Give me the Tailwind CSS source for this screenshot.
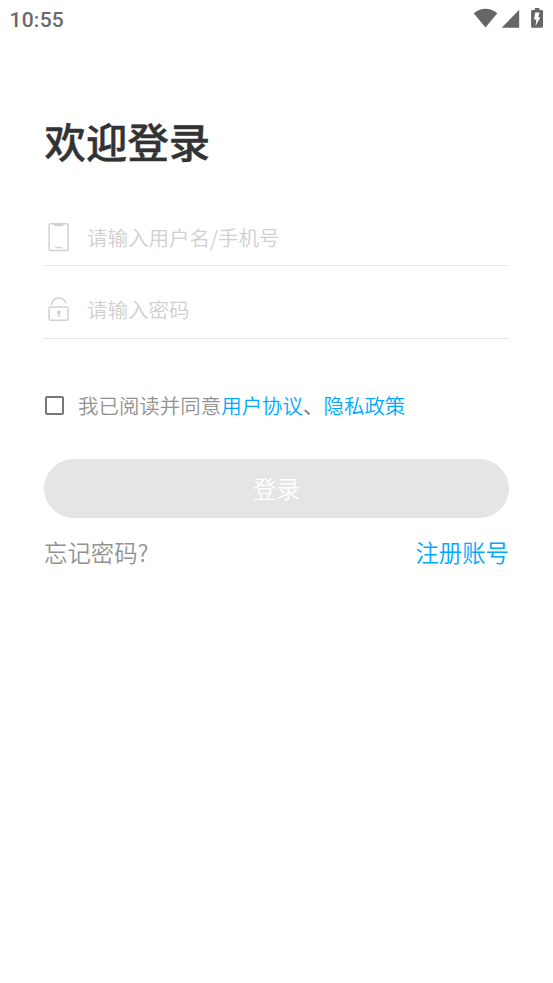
<!DOCTYPE html>
<html lang="zh-CN">
<head>
<meta charset="utf-8">
<title>登录</title>
<script src="https://cdn.jsdelivr.net/npm/@tailwindcss/browser@4"></script>
</head>
<body class="bg-white">
<div class="w-[553px] h-[983px] overflow-hidden bg-white font-['Noto_Sans_CJK_SC',sans-serif] font-[350] whitespace-nowrap">
  <header class="h-[38px] pl-[9.5px] pr-[10px] flex items-center justify-between text-[#6a6a6a]">
    <span class="pt-px font-['Roboto',sans-serif] font-medium text-[21px] leading-[38px] tracking-[0.25px]">10:55</span>
    <svg class="w-[70px] h-[38px]" viewBox="473 0 70 38" fill="#666">
      <path d="M473.700 13.200Q485.500 4.400 497.300 13.200L485.500 27.400Z"/>
      <path d="M519.200 9.700V27.700H501.700Z"/>
      <path fill-rule="evenodd" d="M534.800 8H539.400V10H541.600Q543 10 543 11.400V26.400Q543 27.800 541.600 27.800H532.500Q531.100 27.800 531.100 26.400V11.400Q531.100 10 532.500 10H534.800ZM535.200 12.500L534 19.500H536.300L535.600 25.700L540.400 17.200H538.200L539.600 12.500Z"/>
    </svg>
  </header>
  <main class="pt-[69px] px-11">
    <h1 class="h-[66px] pl-[0.6px] leading-[66px] text-[41.400px] font-medium text-[#333] [-webkit-text-stroke:0.4px_#333]">欢迎登录</h1>
    <div class="mt-[35px] h-[58px] border-b border-[#e8e8e8] flex items-center">
      <svg class="w-[30px] h-[58px] shrink-0" viewBox="44 208 30 58" fill="none" stroke="#d2d2d2">
        <rect x="49.100" y="223.700" width="19" height="26.900" rx="1.800" stroke-width="1.500"/>
        <path d="M53 223.500H64.500L62.700 226.300H54.800Z" fill="#d2d2d2" stroke="none"/>
        <path d="M55.800 247.400H61.500" stroke-width="1.500" stroke-linecap="round"/>
      </svg>
      <span class="ml-[13px] mt-px text-[20.500px] text-[#d0d0d0]">请输入用户名/手机号</span>
    </div>
    <div class="h-[73px] border-b border-[#e8e8e8] flex items-center">
      <svg class="w-[30px] h-[72px] shrink-0" viewBox="44 266 30 72" fill="none" stroke="#d2d2d2">
        <rect x="49.100" y="307" width="19" height="13.200" rx="1.500" stroke-width="1.500"/>
        <path d="M51.300 305.300C52.800 296.500 62.500 295.500 66.200 303.200" stroke-width="1.500"/>
        <circle cx="58.800" cy="312.300" r="1.900" fill="#d2d2d2" stroke="none"/>
        <path d="M58.800 312V317" stroke-width="1.500"/>
      </svg>
      <span class="ml-[13px] mt-[14px] text-[20.500px] text-[#d0d0d0]">请输入密码</span>
    </div>
    <div class="mt-[46px] h-10 flex items-center text-[20.470px] leading-10 text-[#929292]">
      <span class="ml-[1px] w-[19px] h-[19px] border-2 border-[#777] rounded-[2px] shrink-0"></span>
      <span class="ml-[14px]">我已阅读并同意<span class="text-[#00a8ff]">用户协议</span><span class="text-[#666]">、</span><span class="text-[#00a8ff]">隐私政策</span></span>
    </div>
    <button class="mt-[34px] block w-full h-[58.500px] rounded-full bg-[#e5e5e5] text-white text-[23.400px] leading-[58px]">登录</button>
    <div class="mt-[14.500px] h-10 flex justify-between leading-10 text-[23.400px]">
      <span class="text-[#929292]">忘记密码?</span>
      <span class="text-[#00a8ff]">注册账号</span>
    </div>
  </main>
</div>
</body>
</html>
